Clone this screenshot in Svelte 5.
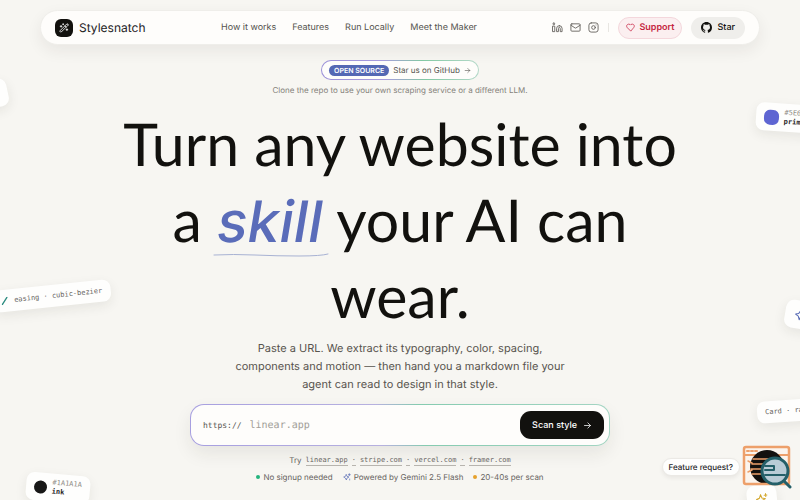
<script>
    const links = ["How it works", "Features", "Run Locally", "Meet the Maker"];
    const examples = ["linear.app", "stripe.com", "vercel.com", "framer.com"];

    let url = "";
</script>

<div class="page">
    <header class="header">
        <a class="brand" href="#top">
            <span class="logo">
                <svg viewBox="0 0 24 24" aria-hidden="true">
                    <path d="m21.6 3.6-1.3-1.2a1.2 1.2 0 0 0-1.7 0L2.4 18.6a1.2 1.2 0 0 0 0 1.8l1.2 1.2a1.2 1.2 0 0 0 1.8 0L21.6 5.4a1.2 1.2 0 0 0 0-1.8ZM14 7l3 3M5 6v4M19 14v4M10 2v2M7 8H3M21 16h-4M11 3H9" />
                </svg>
            </span>
            Stylesnatch
        </a>
        <nav class="links">
            {#each links as link}
                <a href="#section">{link}</a>
            {/each}
        </nav>
        <div class="actions">
            <a class="social" href="#linkedin" aria-label="LinkedIn">
                <svg viewBox="0 0 24 24"><path d="M16 8a6 6 0 0 1 6 6v7h-4v-7a2 2 0 0 0-4 0v7h-4v-7a6 6 0 0 1 6-6ZM2 9h4v12H2zM4 2a2 2 0 1 0 0 4 2 2 0 0 0 0-4" /></svg>
            </a>
            <a class="social" href="#mail" aria-label="Email">
                <svg viewBox="0 0 24 24"><rect x="2" y="4" width="20" height="16" rx="2" /><path d="m22 7-9 6q-1 .6-2 0L2 7" /></svg>
            </a>
            <a class="social" href="#instagram" aria-label="Instagram">
                <svg viewBox="0 0 24 24"><rect x="2" y="2" width="20" height="20" rx="5" /><circle cx="12" cy="12" r="4" /><path d="M17.5 6.5h.01" /></svg>
            </a>
            <span class="divider"></span>
            <button class="pill support" type="button">
                <svg viewBox="0 0 24 24" aria-hidden="true"><path d="M12 21 4 13C-1 8 3 3 7.5 3 10 3 11 4.2 12 5.5 13 4.2 14 3 16.5 3 21 3 25 8 20 13Z" /></svg>
                Support
            </button>
            <a class="pill star" href="#github">
                <svg viewBox="0 0 16 16" aria-hidden="true"><path d="M8 0C3.58 0 0 3.58 0 8c0 3.54 2.29 6.53 5.47 7.59.4.07.55-.17.55-.38v-1.49c-2.01.37-2.53-.49-2.69-.94-.09-.23-.48-.94-.82-1.13-.28-.15-.68-.52-.01-.53.63-.01 1.08.58 1.23.82.72 1.21 1.87.87 2.33.66.07-.52.28-.87.51-1.07-1.78-.2-3.64-.89-3.64-3.95 0-.87.31-1.59.82-2.15-.08-.2-.36-1.02.08-2.12 0 0 .67-.21 2.2.82a7.4 7.4 0 0 1 4 0c1.53-1.04 2.2-.82 2.2-.82.44 1.1.16 1.92.08 2.12.51.56.82 1.27.82 2.15 0 3.07-1.87 3.75-3.65 3.95.29.25.54.73.54 1.48v2.19c0 .21.15.46.55.38A8 8 0 0 0 16 8c0-4.42-3.58-8-8-8Z" /></svg>
                Star
            </a>
        </div>
    </header>

    <main class="hero">
        <a class="source" href="#github">
            <span class="tag">OPEN SOURCE</span>
            Star us on GitHub
            <svg viewBox="0 0 24 24" aria-hidden="true"><path d="M4 12h16M13 5l7 7-7 7" /></svg>
        </a>
        <p class="note">Clone the repo to use your own scraping service or a different LLM.</p>

        <h1>
            <span>Turn any website into</span>
            <span>a <em>skill<svg viewBox="0 0 116 6" preserveAspectRatio="none" aria-hidden="true"><path d="M1 3Q20 2 42 3T86 4T115 2" /></svg></em> your AI can</span>
            <span>wear.</span>
        </h1>

        <p class="lead">
            Paste a URL. We extract its typography, color, spacing, components and motion — then hand you a markdown file your agent can read to design in that style.
        </p>

        <form class="scan" on:submit|preventDefault>
            <label for="url">https://</label>
            <input id="url" type="text" placeholder="linear.app" bind:value={url} />
            <button type="submit">
                Scan style
                <svg viewBox="0 0 24 24" aria-hidden="true"><path d="M4 12h16M13 5l7 7-7 7" /></svg>
            </button>
        </form>

        <div class="examples">
            <span>Try</span>
            {#each examples as example, i}
                {#if i > 0}<span class="dot">·</span>{/if}
                <button type="button" on:click={() => (url = example)}>{example}</button>
            {/each}
        </div>

        <ul class="facts">
            <li><i class="bullet green"></i>No signup needed</li>
            <li>
                <svg viewBox="0 0 24 24" aria-hidden="true"><path d="M10 5 12 10l6 2-6 3-2 6-3-6-5-3 5-2ZM19 2v6M16 5h6M20 18v3" /></svg>
                Powered by Gemini 2.5 Flash
            </li>
            <li><i class="bullet amber"></i>20-40s per scan</li>
        </ul>
    </main>

    <div class="chip blank"></div>
    <div class="chip easing">
        <svg viewBox="0 0 12 12" aria-hidden="true"><path d="M1 11 9 1" /></svg>
        easing · cubic-bezier
    </div>
    <div class="chip swatch ink">
        <i class="color"></i>
        <div><small>#1A1A1A</small><b>ink</b></div>
    </div>
    <div class="chip swatch primary">
        <i class="color"></i>
        <div><small>#5E6AD2</small><b>primary</b></div>
    </div>
    <div class="chip spark">
        <svg viewBox="0 0 24 24" aria-hidden="true"><path d="M10 3 12 10l7 2-7 3-2 7-3-7-6-3 6-2ZM20 2v6M17 5h6" /></svg>
    </div>
    <div class="chip card">Card · radius 12</div>
    <div class="chip gold">
        <svg viewBox="0 0 24 24" aria-hidden="true"><path d="M10 3 12 10l7 2-7 3-2 7-3-7-6-3 6-2ZM20 2v6M17 5h6" /></svg>
    </div>

    <div class="feedback">
        <button class="request" type="button">Feature request?</button>
        <button class="widget" type="button" aria-label="Open feedback">
            <svg viewBox="0 0 50 44" aria-hidden="true">
                <rect x="2" y="2" width="45" height="37" rx="2" fill="#fbf4ed" />
                <path d="M2 10h45" stroke="#eda06b" stroke-width="2" />
                <path d="M5 6h2M9 6h2M13 6h2" stroke="#eda06b" stroke-width="2" />
                <circle cx="25" cy="22" r="17" fill="#14110f" />
                <path d="M11 14h28M10 19h12M9 24h10M10 29h10M6 16l4 2M6 27l4-2" stroke="#eda06b" stroke-width="1.5" />
                <rect x="2" y="2" width="45" height="37" rx="2" fill="none" stroke="#eda06b" stroke-width="2.5" />
                <circle cx="33" cy="26" r="13" fill="#b9ccd6" stroke="#245f68" stroke-width="3" />
                <path d="M23 21h9v4h-9M23 30h20" fill="none" stroke="#245f68" stroke-width="2" />
                <path d="m42 36 6 6" stroke="#245f68" stroke-width="3" />
            </svg>
        </button>
    </div>
</div>

<style>
    :global(body) {
        background: #f7f6f2;
    }

    .page {
        box-sizing: border-box;
        color: #12110e;
        font-family: "Inter", sans-serif;
        font-size: 9px;
        min-height: 100vh;
        overflow: hidden;
        padding: 10px 40px;
        position: relative;
        text-rendering: geometricPrecision;
    }

    a {
        color: inherit;
        text-decoration: none;
    }

    button,
    input {
        border: 0;
        font-family: inherit;
        text-rendering: inherit;
    }

    button {
        cursor: pointer;
    }

    svg {
        fill: none;
        flex: none;
        stroke: currentColor;
        stroke-linecap: round;
        stroke-linejoin: round;
        stroke-width: 2;
    }

    .header {
        align-items: center;
        background: #fefdfb;
        border: 1px solid #efeeea;
        border-radius: 18px;
        box-shadow: 0 6px 16px #28231a12;
        box-sizing: border-box;
        display: flex;
        height: 35px;
        justify-content: space-between;
        padding: 0 14px;
    }

    .brand {
        align-items: center;
        color: #25231f;
        display: flex;
        font-size: 12px;
        gap: 6px;
    }

    .logo {
        background: #12110e;
        border-radius: 6px;
        color: #fff;
        display: grid;
        height: 18px;
        place-items: center;
        width: 18px;
    }

    .logo svg {
        height: 10px;
        width: 10px;
    }

    .links {
        color: #55534e;
        display: flex;
        gap: 16px;
    }

    .actions {
        align-items: center;
        display: flex;
        gap: 7px;
    }

    .social {
        color: #67645f;
        display: flex;
    }

    .social svg {
        height: 11px;
        width: 11px;
    }

    .divider {
        background: #e8e6e2;
        height: 9px;
        margin: 0 2px;
        width: 1px;
    }

    .pill {
        align-items: center;
        border-radius: 11px;
        box-sizing: border-box;
        display: flex;
        font-size: 9px;
        font-weight: 600;
        gap: 4px;
        height: 22px;
        padding: 0 10px;
    }

    .pill svg {
        height: 9px;
        width: 9px;
    }

    .support {
        background: #fbeff0;
        border: 1px solid #f4d7dc;
        color: #c51f3f;
        padding: 0 7px;
    }

    .star {
        background: #efeeeb;
        font-weight: 500;
        gap: 5px;
        margin-left: 2px;
    }

    .star svg {
        fill: currentColor;
        height: 11px;
        stroke: none;
        width: 11px;
    }

    .hero {
        align-items: center;
        display: flex;
        flex-direction: column;
        padding-top: 15px;
    }

    .source {
        align-items: center;
        background: linear-gradient(#fefdfb, #fefdfb) padding-box, linear-gradient(80deg, #9a8fd8, #a79cdd 40%, #83c9a3 65%, #b5d9ca) border-box;
        border: 1px solid transparent;
        border-radius: 10px;
        box-sizing: border-box;
        color: #55534e;
        display: flex;
        font-size: 8px;
        gap: 4px;
        height: 20px;
        padding: 0 7px;
    }

    .source svg {
        height: 7px;
        width: 7px;
    }

    .tag {
        background: #5468b4;
        border-radius: 6px;
        color: #fff;
        font-size: 7px;
        font-weight: 600;
        line-height: 11px;
        padding: 0 5px;
    }

    .note {
        color: #85827b;
        font-size: 8px;
        line-height: 12px;
        margin: 4px 0 10px;
    }

    h1 {
        font-family: "Lato", sans-serif;
        font-size: 59px;
        font-weight: 400;
        line-height: 76px;
        margin: 0;
        text-align: center;
    }

    h1 span {
        display: block;
        white-space: nowrap;
    }

    em {
        color: #5a6cb9;
        display: inline-block;
        font-family: "Inter", sans-serif;
        font-size: 57px;
        font-weight: 500;
        line-height: 60px;
        position: relative;
    }

    em svg {
        bottom: -6px;
        height: 6px;
        left: -4px;
        position: absolute;
        stroke: #a8b2d3;
        stroke-width: 1;
        width: 116px;
    }

    .lead {
        color: #57544e;
        font-size: 11px;
        line-height: 18px;
        margin: 5px 0 11px;
        max-width: 350px;
        text-align: center;
    }

    .scan {
        align-items: center;
        background: linear-gradient(#fefdfb, #fefdfb) padding-box, linear-gradient(80deg, #a79fe0, #b7b1df 45%, #86cbb0 55%, #a4d5c3) border-box;
        border: 1px solid transparent;
        border-radius: 14px;
        box-shadow: 0 8px 18px #28231a14;
        box-sizing: border-box;
        display: flex;
        height: 42px;
        max-width: 420px;
        padding: 0 5px 0 12px;
        width: 100%;
    }

    .scan label {
        color: #55534e;
        font-family: "DejaVu Sans Mono", monospace;
        font-size: 8px;
    }

    .scan input {
        background: none;
        flex: 1;
        font-family: "DejaVu Sans Mono", monospace;
        font-size: 10px;
        min-width: 0;
        outline: none;
        padding: 0 8px;
    }

    .scan input::placeholder {
        color: #a19e98;
    }

    .scan button {
        align-items: center;
        background: #12110e;
        border-radius: 11px;
        color: #fff;
        display: flex;
        font-size: 9px;
        font-weight: 500;
        gap: 6px;
        height: 28px;
        padding: 0 12px;
    }

    .scan button svg {
        height: 9px;
        width: 9px;
    }

    .examples {
        align-items: center;
        color: #67645f;
        display: flex;
        font-size: 8px;
        gap: 4px;
        line-height: 11px;
        margin-top: 9px;
    }

    .examples button,
    .dot {
        background: none;
        border-bottom: 1px solid #b7b4ae;
        color: inherit;
        font-family: "DejaVu Sans Mono", monospace;
        font-size: 7px;
        line-height: 10px;
        padding: 0;
    }

    .facts {
        color: #67645f;
        display: flex;
        font-size: 8px;
        gap: 10px;
        line-height: 12px;
        list-style: none;
        margin: 5px 0 0;
        padding: 0;
    }

    .facts li {
        align-items: center;
        display: flex;
        gap: 3px;
    }

    .facts svg {
        color: #5468b4;
        height: 8px;
        width: 8px;
    }

    .bullet {
        border-radius: 50%;
        height: 4px;
        width: 4px;
    }

    .green {
        background: #24b47e;
    }

    .amber {
        background: #e6a12c;
    }

    /* Floating design tokens around the hero */
    .chip {
        align-items: center;
        background: #fefefd;
        border-radius: 8px;
        box-shadow: 0 4px 12px #28231a14;
        box-sizing: border-box;
        color: #67645f;
        display: flex;
        font-family: "DejaVu Sans Mono", monospace;
        font-size: 7px;
        gap: 5px;
        position: absolute;
        white-space: nowrap;
    }

    .blank {
        height: 28px;
        left: -42px;
        top: 82px;
        transform: rotate(-12deg);
        width: 50px;
    }

    .easing {
        height: 22px;
        left: -7px;
        padding: 0 8px;
        top: 285px;
        transform: rotate(-6deg);
    }

    .easing svg {
        color: #2c8c80;
        height: 8px;
        width: 8px;
    }

    .swatch {
        height: 28px;
        padding: 0 8px;
    }

    .swatch small,
    .swatch b {
        display: block;
        font-size: 7px;
        line-height: 9px;
    }

    .swatch small {
        color: #8f8c86;
    }

    .swatch b {
        color: #25231f;
    }

    .color {
        background: #171716;
        border-radius: 50%;
        height: 13px;
        width: 13px;
    }

    .ink {
        left: 26px;
        top: 474px;
        transform: rotate(5deg);
    }

    .primary {
        left: calc(100% - 44px);
        top: 104px;
        transform: rotate(4deg);
    }

    .primary .color {
        background: #5e65d2;
        border-radius: 6px;
        height: 15px;
        width: 15px;
    }

    .spark {
        color: #5468b4;
        height: 28px;
        left: calc(100% - 15px);
        padding: 0 10px;
        top: 301px;
        transform: rotate(10deg);
    }

    .spark svg,
    .gold svg {
        height: 12px;
        width: 12px;
    }

    .card {
        height: 22px;
        left: calc(100% - 43px);
        padding: 0 8px;
        top: 399px;
        transform: rotate(-4deg);
    }

    .gold {
        color: #d3a72c;
        height: 28px;
        left: calc(100% - 53px);
        padding: 0 9px;
        top: 485px;
        transform: rotate(-6deg);
    }

    .feedback {
        align-items: center;
        bottom: 11px;
        display: flex;
        gap: 2px;
        position: absolute;
        right: 8px;
    }

    .request {
        background: #fefefd;
        border: 1px solid #ebe9e5;
        border-radius: 9px;
        box-shadow: 0 2px 4px #28231a12;
        color: #25231f;
        font-size: 8px;
        font-weight: 500;
        height: 18px;
        padding: 0 6px;
    }

    .widget {
        background: none;
        display: flex;
        padding: 0;
    }

    .widget svg {
        height: 44px;
        stroke-width: 0;
        width: 50px;
    }
</style>
